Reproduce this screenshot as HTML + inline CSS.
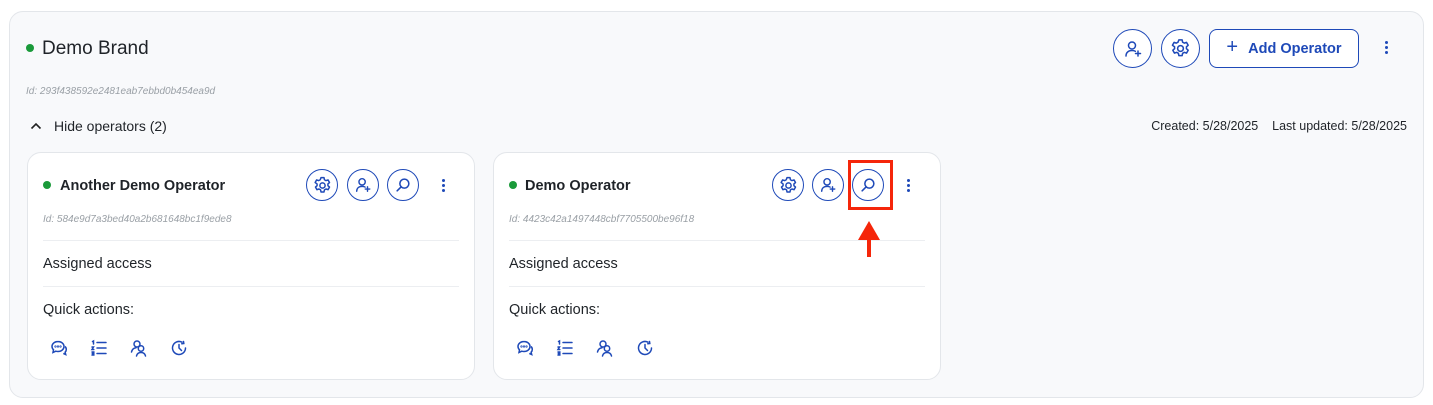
<!DOCTYPE html>
<html><head><style>
*{box-sizing:border-box;margin:0;padding:0}
body{width:1433px;height:405px;background:#fff;font-family:"Liberation Sans",sans-serif;position:relative;overflow:hidden;color:#1f2328}
.a{position:absolute}
.outer{left:9px;top:11px;width:1415px;height:387px;background:#f8f9fb;border:1px solid #e3e6ea;border-radius:14px}
.dot{width:8px;height:8px;border-radius:50%;background:#1a9a3a}
.cb{border:1.3px solid #1e49b8;border-radius:50%;display:flex;align-items:center;justify-content:center;background:#fff}
.card{background:#fff;border:1px solid #e3e6ea;border-radius:14px;width:448px;height:228px;top:152px}
.id{font-size:10px;font-style:italic;color:#9aa0a6}
.hr{height:1px;background:#eceef1;width:416px;left:16px}
.t14{font-size:14.5px}
svg{display:block}
</style></head><body>
<div class="a outer"></div>
<div class="a dot" style="left:26px;top:44px"></div>
<div class="a" style="left:42px;top:38px;font-size:19px">Demo Brand</div>
<div class="a cb" style="left:1113px;top:29px;width:39px;height:39px"><svg width="20" height="20" viewBox="0 0 20 20" fill="none" stroke="#1e49b8" stroke-width="1.5" stroke-linecap="round"><circle cx="9" cy="6.5" r="3.5"/><path d="M3 17c0-3.5 2.5-5.5 6-5.5 1.5 0 2.5.3 3.3.8M15 12v5M12.5 14.5h5"/></svg></div>
<div class="a cb" style="left:1161px;top:29px;width:39px;height:39px"><svg width="23" height="23" viewBox="0 0 24 24" fill="none" stroke="#1e49b8" stroke-width="1.6"><circle cx="12" cy="12" r="3"/><path d="M10.3 3h3.4l.5 2.4 1.8 1 2.3-.8 1.7 3-1.8 1.6v2l1.8 1.6-1.7 3-2.3-.8-1.8 1-.5 2.4h-3.4l-.5-2.4-1.8-1-2.3.8-1.7-3 1.8-1.6v-2L3.6 8.6l1.7-3 2.3.8 1.8-1z" stroke-linejoin="round"/></svg></div>
<div class="a" style="left:1209px;top:29px;width:150px;height:39px;border:1.3px solid #1e49b8;border-radius:8px;background:#fff;color:#1e49b8;font-weight:bold;font-size:14.5px;display:flex;align-items:center;justify-content:center;gap:10px"><span style="font-size:20px;font-weight:normal;margin-top:-2px">+</span>Add Operator</div>
<div class="a" style="left:1385px;top:41px;width:3px"><div style="width:3px;height:3px;background:#1e49b8;border-radius:50%;margin-bottom:2px"></div><div style="width:3px;height:3px;background:#1e49b8;border-radius:50%;margin-bottom:2px"></div><div style="width:3px;height:3px;background:#1e49b8;border-radius:50%"></div></div>
<div class="a id" style="left:26px;top:86px">Id: 293f438592e2481eab7ebbd0b454ea9d</div>
<svg class="a" style="left:30px;top:121px" width="12" height="10" viewBox="0 0 12 10"><path d="M1.5 7.5 6 3l4.5 4.5" fill="none" stroke="#222" stroke-width="1.6"/></svg>
<div class="a" style="left:54px;top:118px;font-size:14px">Hide operators (2)</div>
<div class="a" style="right:26px;top:119px;font-size:12.5px">Created: 5/28/2025&nbsp;&nbsp;&nbsp;&nbsp;Last updated: 5/28/2025</div>

<div class="a card" style="left:27px"></div>
<div class="a card" style="left:493px"></div>

<!-- card 1 -->
<div class="a" style="left:27px;top:152px;width:448px;height:228px">
<div class="a dot" style="left:16px;top:29px"></div>
<div class="a t14" style="left:33px;top:26px;font-weight:bold">Another Demo Operator</div>
<div class="a cb" style="left:279px;top:17px;width:32px;height:32px"><svg width="21" height="21" viewBox="0 0 24 24" fill="none" stroke="#1e49b8" stroke-width="1.7"><circle cx="12" cy="12" r="3"/><path d="M10.3 3h3.4l.5 2.4 1.8 1 2.3-.8 1.7 3-1.8 1.6v2l1.8 1.6-1.7 3-2.3-.8-1.8 1-.5 2.4h-3.4l-.5-2.4-1.8-1-2.3.8-1.7-3 1.8-1.6v-2L3.6 8.6l1.7-3 2.3.8 1.8-1z" stroke-linejoin="round"/></svg></div>
<div class="a cb" style="left:320px;top:17px;width:32px;height:32px"><svg width="18" height="18" viewBox="0 0 20 20" fill="none" stroke="#1e49b8" stroke-width="1.6" stroke-linecap="round"><circle cx="9" cy="6.5" r="3.5"/><path d="M3 17c0-3.5 2.5-5.5 6-5.5 1.5 0 2.5.3 3.3.8M15 12v5M12.5 14.5h5"/></svg></div>
<div class="a cb" style="left:360px;top:17px;width:32px;height:32px"><svg width="18" height="18" viewBox="0 0 20 20" fill="none" stroke="#1e49b8" stroke-width="1.7" stroke-linecap="round"><circle cx="11.5" cy="8.5" r="5"/><path d="M8 12l-4.5 4.5"/></svg></div>
<div class="a" style="left:415px;top:27px"><div style="width:3px;height:3px;background:#1e49b8;border-radius:50%;margin-bottom:2px"></div><div style="width:3px;height:3px;background:#1e49b8;border-radius:50%;margin-bottom:2px"></div><div style="width:3px;height:3px;background:#1e49b8;border-radius:50%"></div></div>
<div class="a id" style="left:16px;top:62px">Id: 584e9d7a3bed40a2b681648bc1f9ede8</div>
<div class="a hr" style="top:88px"></div>
<div class="a t14" style="left:16px;top:104px">Assigned access</div>
<div class="a hr" style="top:134px"></div>
<div class="a t14" style="left:16px;top:150px">Quick actions:</div>
<svg class="a" style="left:23px;top:187px" width="18" height="18" viewBox="0 0 18 18" fill="none" stroke="#1e49b8" stroke-width="1.5"><path d="M8 2.5c-3.3 0-6 2.2-6 5 0 1.3.6 2.4 1.5 3.3L3 13.5l2.8-1.3c.7.2 1.4.3 2.2.3 3.3 0 6-2.2 6-5s-2.7-5-6-5z"/><path d="M15 7.5c1 .8 1.3 1.8 1.3 3 0 1-.4 2-1.2 2.7l.6 2.3-2.4-1.1"/><circle cx="5.5" cy="7.5" r=".4"/><circle cx="8" cy="7.5" r=".4"/><circle cx="10.5" cy="7.5" r=".4"/></svg>
<svg class="a" style="left:63px;top:187px" width="18" height="18" viewBox="0 0 18 18" fill="none" stroke="#1e49b8" stroke-width="1.5" stroke-linecap="round"><path d="M7 3.5h9M7 9h9M7 14.5h9M2.5 2.5l1-.5v3M2 8h1.5L2 10.5h1.8M2 13h1.8v3H2M2.3 14.5h1.5"/></svg>
<svg class="a" style="left:103px;top:187px" width="18" height="18" viewBox="0 0 18 18" fill="none" stroke="#1e49b8" stroke-width="1.5" stroke-linecap="round"><circle cx="7" cy="5" r="3"/><path d="M1.5 13c.5-2.5 2.3-4 4.5-4.3"/><circle cx="11" cy="9.5" r="2.7"/><path d="M6.5 17c.5-2.2 2.3-3.5 4.5-3.5s4 1.3 4.5 3.5"/></svg>
<svg class="a" style="left:143px;top:187px" width="18" height="18" viewBox="0 0 18 18" fill="none" stroke="#1e49b8" stroke-width="1.5" stroke-linecap="round"><path d="M15.5 9A6.5 6.5 0 1 1 12 3.2"/><path d="M9 5.5V9l2.5 2.5M13.5 2.5l.3 2-2 .3"/></svg>
</div>

<!-- card 2 -->
<div class="a" style="left:493px;top:152px;width:448px;height:228px">
<div class="a dot" style="left:16px;top:29px"></div>
<div class="a t14" style="left:32px;top:26px;font-weight:bold">Demo Operator</div>
<div class="a cb" style="left:279px;top:17px;width:32px;height:32px"><svg width="21" height="21" viewBox="0 0 24 24" fill="none" stroke="#1e49b8" stroke-width="1.7"><circle cx="12" cy="12" r="3"/><path d="M10.3 3h3.4l.5 2.4 1.8 1 2.3-.8 1.7 3-1.8 1.6v2l1.8 1.6-1.7 3-2.3-.8-1.8 1-.5 2.4h-3.4l-.5-2.4-1.8-1-2.3.8-1.7-3 1.8-1.6v-2L3.6 8.6l1.7-3 2.3.8 1.8-1z" stroke-linejoin="round"/></svg></div>
<div class="a cb" style="left:319px;top:17px;width:32px;height:32px"><svg width="18" height="18" viewBox="0 0 20 20" fill="none" stroke="#1e49b8" stroke-width="1.6" stroke-linecap="round"><circle cx="9" cy="6.5" r="3.5"/><path d="M3 17c0-3.5 2.5-5.5 6-5.5 1.5 0 2.5.3 3.3.8M15 12v5M12.5 14.5h5"/></svg></div>
<div class="a cb" style="left:359px;top:17px;width:32px;height:32px"><svg width="18" height="18" viewBox="0 0 20 20" fill="none" stroke="#1e49b8" stroke-width="1.7" stroke-linecap="round"><circle cx="11.5" cy="8.5" r="5"/><path d="M8 12l-4.5 4.5"/></svg></div>
<div class="a" style="left:414px;top:27px"><div style="width:3px;height:3px;background:#1e49b8;border-radius:50%;margin-bottom:2px"></div><div style="width:3px;height:3px;background:#1e49b8;border-radius:50%;margin-bottom:2px"></div><div style="width:3px;height:3px;background:#1e49b8;border-radius:50%"></div></div>
<div class="a id" style="left:16px;top:62px">Id: 4423c42a1497448cbf7705500be96f18</div>
<div class="a hr" style="top:88px"></div>
<div class="a t14" style="left:16px;top:104px">Assigned access</div>
<div class="a hr" style="top:134px"></div>
<div class="a t14" style="left:16px;top:150px">Quick actions:</div>
<svg class="a" style="left:23px;top:187px" width="18" height="18" viewBox="0 0 18 18" fill="none" stroke="#1e49b8" stroke-width="1.5"><path d="M8 2.5c-3.3 0-6 2.2-6 5 0 1.3.6 2.4 1.5 3.3L3 13.5l2.8-1.3c.7.2 1.4.3 2.2.3 3.3 0 6-2.2 6-5s-2.7-5-6-5z"/><path d="M15 7.5c1 .8 1.3 1.8 1.3 3 0 1-.4 2-1.2 2.7l.6 2.3-2.4-1.1"/><circle cx="5.5" cy="7.5" r=".4"/><circle cx="8" cy="7.5" r=".4"/><circle cx="10.5" cy="7.5" r=".4"/></svg>
<svg class="a" style="left:63px;top:187px" width="18" height="18" viewBox="0 0 18 18" fill="none" stroke="#1e49b8" stroke-width="1.5" stroke-linecap="round"><path d="M7 3.5h9M7 9h9M7 14.5h9M2.5 2.5l1-.5v3M2 8h1.5L2 10.5h1.8M2 13h1.8v3H2M2.3 14.5h1.5"/></svg>
<svg class="a" style="left:103px;top:187px" width="18" height="18" viewBox="0 0 18 18" fill="none" stroke="#1e49b8" stroke-width="1.5" stroke-linecap="round"><circle cx="7" cy="5" r="3"/><path d="M1.5 13c.5-2.5 2.3-4 4.5-4.3"/><circle cx="11" cy="9.5" r="2.7"/><path d="M6.5 17c.5-2.2 2.3-3.5 4.5-3.5s4 1.3 4.5 3.5"/></svg>
<svg class="a" style="left:143px;top:187px" width="18" height="18" viewBox="0 0 18 18" fill="none" stroke="#1e49b8" stroke-width="1.5" stroke-linecap="round"><path d="M15.5 9A6.5 6.5 0 1 1 12 3.2"/><path d="M9 5.5V9l2.5 2.5M13.5 2.5l.3 2-2 .3"/></svg>
</div>

<div class="a" style="left:848px;top:160px;width:45px;height:50px;border:3px solid #f5260a"></div>
<svg class="a" style="left:857px;top:220px" width="24" height="38" viewBox="0 0 24 38"><path d="M12 1 L23 20 H1 Z" fill="#f5260a"/><rect x="10" y="19" width="4" height="18" fill="#f5260a"/></svg>
</body></html>
